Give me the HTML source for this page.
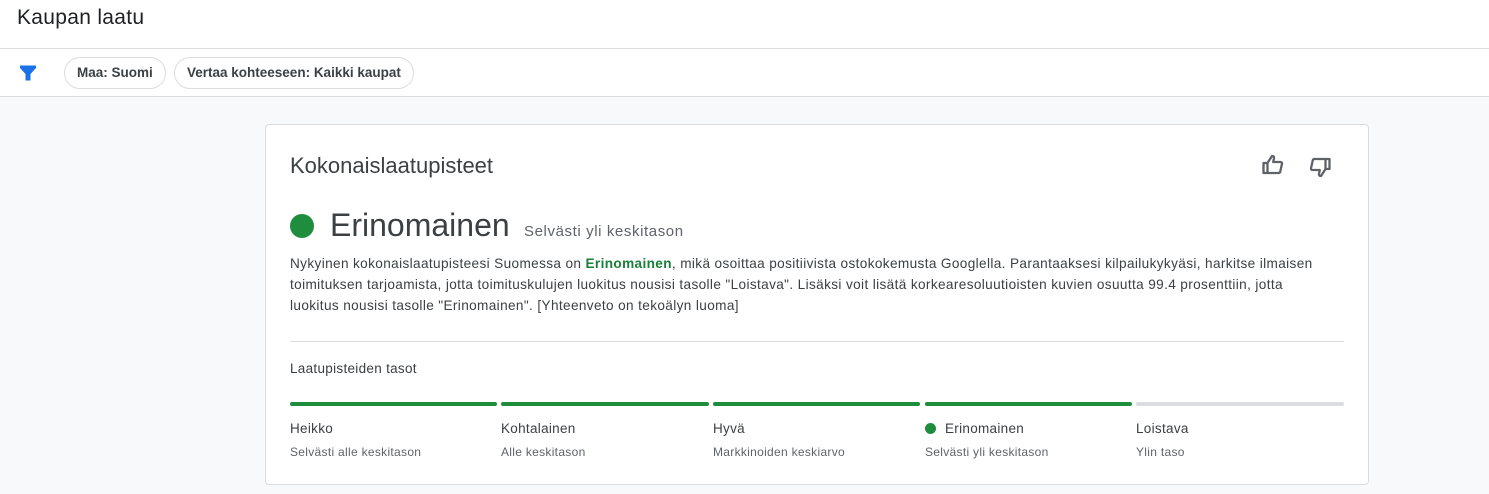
<!DOCTYPE html>
<html><head><meta charset="utf-8"><style>
*{margin:0;padding:0;box-sizing:border-box}
body{width:1489px;height:494px;overflow:hidden;background:#f8f9fa;font-family:"Liberation Sans",Arial,sans-serif;color:#202124;position:relative}
.top{position:absolute;left:0;top:0;width:1489px;height:97px;background:#fff;border-bottom:1px solid #dadce0}
.title{position:absolute;left:17px;top:6px;font-size:21px;letter-spacing:.3px;color:#202124}
.hl{position:absolute;left:0;top:48px;width:1489px;height:1px;background:#dadce0}
.chip{position:absolute;top:57px;height:32px;border:1px solid #dadce0;border-radius:16px;font-size:13.5px;font-weight:bold;color:#3c4043;line-height:30px;padding:0 12px;letter-spacing:0}
.card{position:absolute;left:265px;top:124px;width:1104px;height:361px;background:#fff;border:1px solid #dadce0;border-radius:4px}
.h{position:absolute;left:24px;top:28px;font-size:22px;color:#3c4043}
.dot{position:absolute;border-radius:50%;background:#1e8e3e}
.big{position:absolute;left:64px;top:82px;font-size:32px;color:#3c4043}
.sub{position:absolute;left:258px;top:98px;font-size:15px;letter-spacing:.6px;color:#5f6368}
.p{position:absolute;left:24px;top:128px;white-space:nowrap;font-size:13.6px;letter-spacing:.37px;line-height:21px;color:#3c4043}
.p b{color:#188038}
.sep{position:absolute;left:24px;top:216px;width:1054px;height:1px;background:#dadce0}
.lv{position:absolute;left:24px;top:236px;font-size:13.5px;letter-spacing:.3px;color:#3c4043}
.seg{position:absolute;top:277px;height:4px;border-radius:2px;background:#1e8e3e}
.lab{position:absolute;top:296px;font-size:13.5px;letter-spacing:.3px;color:#3c4043}
.ls{position:absolute;top:320px;font-size:12px;letter-spacing:.3px;color:#5f6368}
</style></head><body>
<div class="top">
<div class="title">Kaupan laatu</div>
<div class="hl"></div>
<svg style="position:absolute;left:19px;top:64px" width="18" height="18" viewBox="0 0 18 18"><path d="M1 1.5h16v2.5l-5.5 6v6.5h-5V10L1 4z" fill="#1a73e8"/></svg>
<div class="chip" style="left:64px">Maa: Suomi</div>
<div class="chip" style="left:174px">Vertaa kohteeseen: Kaikki kaupat</div>
</div>
<div class="card">
<div class="h">Kokonaislaatupisteet</div>
<svg style="position:absolute;left:995px;top:28px" width="24" height="24" viewBox="0 0 24 24"><path d="M2.5 10h4v10h-4zM6.5 10l4.5-7c1.6 0 2.3 1 2 2.3L12.2 9h7.3c1 0 1.7.8 1.5 1.8l-1.8 8c-.2.7-.8 1.2-1.5 1.2H6.5" fill="none" stroke="#5f6368" stroke-width="2.3" stroke-linejoin="round"/></svg>
<svg style="position:absolute;left:1042px;top:30px" width="24" height="24" viewBox="0 0 24 24"><path d="M21.5 14h-4V4h4zM17.5 14L13 21c-1.6 0-2.3-1-2-2.3l.8-3.7H4.5c-1 0-1.7-.8-1.5-1.8l1.8-8C5 4.5 5.6 4 6.3 4h11.2" fill="none" stroke="#5f6368" stroke-width="2.3" stroke-linejoin="round"/></svg>
<div class="dot" style="left:24px;top:89px;width:24px;height:24px"></div>
<div class="big">Erinomainen</div>
<div class="sub">Selvästi yli keskitason</div>
<div class="p">Nykyinen kokonaislaatupisteesi Suomessa on <b>Erinomainen</b>, mikä osoittaa positiivista ostokokemusta Googlella. Parantaaksesi kilpailukykyäsi, harkitse ilmaisen<br>toimituksen tarjoamista, jotta toimituskulujen luokitus nousisi tasolle "Loistava". Lisäksi voit lisätä korkearesoluutioisten kuvien osuutta 99.4 prosenttiin, jotta<br>luokitus nousisi tasolle "Erinomainen". [Yhteenveto on tekoälyn luoma]</div>
<div class="sep"></div>
<div class="lv">Laatupisteiden tasot</div>
<div class="seg" style="left:24px;width:207px"></div>
<div class="seg" style="left:235px;width:208px"></div>
<div class="seg" style="left:447px;width:207px"></div>
<div class="seg" style="left:659px;width:207px"></div>
<div class="seg" style="left:870px;width:208px;background:#dadce0"></div>
<div class="lab" style="left:24px">Heikko</div><div class="ls" style="left:24px">Selvästi alle keskitason</div>
<div class="lab" style="left:235px">Kohtalainen</div><div class="ls" style="left:235px">Alle keskitason</div>
<div class="lab" style="left:447px">Hyvä</div><div class="ls" style="left:447px">Markkinoiden keskiarvo</div>
<div class="dot" style="left:659px;top:298px;width:11px;height:11px"></div>
<div class="lab" style="left:679px">Erinomainen</div><div class="ls" style="left:659px">Selvästi yli keskitason</div>
<div class="lab" style="left:870px">Loistava</div><div class="ls" style="left:870px">Ylin taso</div>
</div>
</body></html>
